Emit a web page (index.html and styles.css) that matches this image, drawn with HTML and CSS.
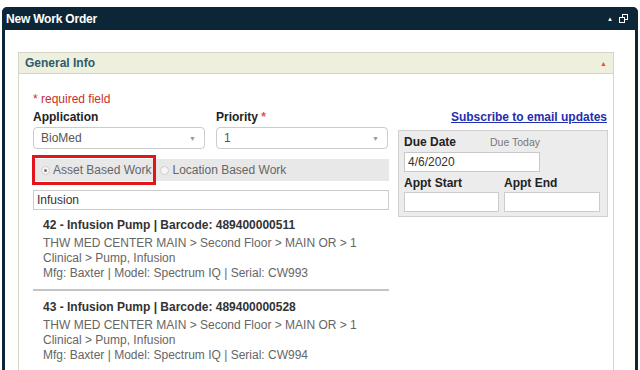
FILE: index.html
```html
<!DOCTYPE html>
<html lang="en">

<head>
    <meta charset="UTF-8">
    <title>New Work Order</title>
    <link rel="stylesheet" href="styles.css">
</head>

<body>
    <div class="window">
        <div class="window-head">
            <span class="window-title">New Work Order</span>
            <span class="window-tools">
                <span class="tri-up">&#9650;</span>
                <svg class="restore" width="9" height="9" viewBox="0 0 9 9">
                    <rect x="3.5" y="0.5" width="5" height="5" fill="none" stroke="#fff" />
                    <rect x="0.5" y="3.5" width="5" height="5" fill="#0d2637" stroke="#fff" />
                </svg>
            </span>
        </div>
        <div class="window-body">
            <div class="panel">
                <div class="panel-head">
                    <span>General Info</span>
                    <span class="panel-toggle">&#9650;</span>
                </div>
                <div class="panel-body">
                    <div class="left-col">
                        <p class="required">* required field</p>
                        <div class="field-row">
                            <div class="field">
                                <label>Application</label>
                                <div class="select">BioMed<span class="arrow">&#9660;</span></div>
                            </div>
                            <div class="field">
                                <label>Priority <span class="star">*</span></label>
                                <div class="select">1<span class="arrow">&#9660;</span></div>
                            </div>
                        </div>
                        <div class="radio-row">
                            <label class="radio selected"><span class="dot checked"></span>Asset Based Work</label>
                            <label class="radio"><span class="dot"></span>Location Based Work</label>
                        </div>
                        <div class="text-input">Infusion</div>
                        <ul class="results">
                            <li>
                                <b>42 - Infusion Pump | Barcode: 489400000511</b>
                                <span>THW MED CENTER MAIN &gt; Second Floor &gt; MAIN OR &gt; 1</span>
                                <span>Clinical &gt; Pump, Infusion</span>
                                <span>Mfg: Baxter | Model: Spectrum IQ | Serial: CW993</span>
                            </li>
                            <li>
                                <b>43 - Infusion Pump | Barcode: 489400000528</b>
                                <span>THW MED CENTER MAIN &gt; Second Floor &gt; MAIN OR &gt; 1</span>
                                <span>Clinical &gt; Pump, Infusion</span>
                                <span>Mfg: Baxter | Model: Spectrum IQ | Serial: CW994</span>
                            </li>
                        </ul>
                    </div>
                    <div class="right-col">
                        <a class="subscribe" href="#">Subscribe to email updates</a>
                        <div class="dates">
                            <div class="due-line">
                                <label>Due Date</label>
                                <span class="due-note">Due Today</span>
                            </div>
                            <div class="text-input due-input">4/6/2020</div>
                            <div class="appt">
                                <div>
                                    <label>Appt Start</label>
                                    <div class="text-input"></div>
                                </div>
                                <div>
                                    <label>Appt End</label>
                                    <div class="text-input"></div>
                                </div>
                            </div>
                        </div>
                    </div>
                </div>
            </div>
        </div>
    </div>
</body>

</html>
```

FILE: styles.css
```css
body {
    margin: 0;
    padding: 7px 2px 0;
    font-family: 'Liberation Sans', Arial, sans-serif;
    font-size: 12px;
    color: #333;
    background: white;
    overflow: hidden;
}

.window {
    border: 3px solid #0d2637;
    border-top: 0;
    border-radius: 6px 6px 0 0;
    height: 400px;
}

.window-head {
    background: #0d2637;
    color: white;
    height: 23px;
    display: flex;
    align-items: center;
    justify-content: space-between;
    padding: 0 10px 0 4px;
    border-radius: 5px 5px 0 0;
    margin: 0 -3px;
}

.window-title {
    font-weight: bold;
    font-size: 12px;
    letter-spacing: -0.2px;
}

.window-tools {
    display: flex;
    align-items: center;
    gap: 6px;
}

.tri-up {
    font-size: 6px;
}

.window-body {
    padding: 22px 21px 0 13px;
}

.panel {
    border: 1px solid #d6d6c8;
    border-bottom: 0;
}

.panel-head {
    background: #efefdd;
    height: 20px;
    border-bottom: 1px solid #d6d6c8;
    display: flex;
    align-items: center;
    justify-content: space-between;
    padding: 0 6px 0 6px;
    color: #2b5d6e;
    font-weight: bold;
}

.panel-toggle {
    color: #e0562b;
    font-size: 7px;
}

.panel-body {
    display: grid;
    grid-template-columns: 356px 210px;
    gap: 9px;
    padding: 18px 0 0 14px;
}

.required {
    margin: 0;
    color: #c8302d;
    line-height: 14px;
}

.field-row {
    display: flex;
    gap: 11px;
    margin-top: 3px;
}

.field {
    width: 172px;
}

label {
    display: block;
    font-weight: bold;
    color: #222;
    line-height: 16px;
}

.star {
    color: #e0505a;
}

.select {
    margin-top: 2px;
    height: 20px;
    border: 1px solid #ccc;
    border-radius: 4px;
    padding: 0 8px 0 7px;
    display: flex;
    align-items: center;
    justify-content: space-between;
    color: #555;
}

.arrow {
    color: #999;
    font-size: 7px;
}

.radio-row {
    margin-top: 10px;
    background: #e8e8e8;
    height: 22px;
    display: flex;
    align-items: center;
}

.radio {
    display: flex;
    align-items: center;
    font-weight: normal;
    color: #666;
    font-size: 12px;
    gap: 3px;
}

.radio.selected {
    border: 3px solid #e4141b;
    box-sizing: border-box;
    height: 30px;
    margin: 0 4px 0 -1px;
    padding: 0 2px 0 6px;
}

.dot {
    width: 9px;
    height: 9px;
    border-radius: 50%;
    border: 1px solid #cfcfcf;
    background: #f6f6f6;
    box-sizing: border-box;
    position: relative;
}

.dot.checked::after {
    content: "";
    position: absolute;
    left: 2px;
    top: 2px;
    width: 3px;
    height: 3px;
    border-radius: 50%;
    background: #777;
}

.text-input {
    height: 18px;
    border: 1px solid #ccc;
    background: white;
    padding: 0 3px;
    line-height: 18px;
    color: #333;
    margin-top: 9px;
}

.results {
    list-style: none;
    margin: 8px 0 0;
    padding: 0;
}

.results li {
    border-bottom: 2px solid #c4c4c4;
    padding: 0 0 8px 10px;
    margin-bottom: 9px;
    line-height: 15px;
}

.results b {
    display: block;
    color: #333;
    margin-bottom: 3px;
}

.results span {
    display: block;
    color: #666;
}

.right-col {
    padding-top: 17px;
    display: flex;
    flex-direction: column;
    align-items: flex-end;
}

.subscribe {
    color: #1f2fb0;
    font-weight: bold;
    line-height: 16px;
    margin-right: 1px;
}

.dates {
    margin-top: 5px;
    width: 100%;
    box-sizing: border-box;
    background: #ececec;
    border: 1px solid #d0d0d0;
    padding: 4px 7px 4px 5px;
}

.dates label {
    line-height: 14px;
}

.due-line {
    display: flex;
    align-items: center;
    line-height: 14px;
}

.due-line label {
    width: 86px;
}

.due-note {
    color: #777;
    font-size: 10.5px;
}

.due-input {
    margin-top: 3px;
    width: 128px;
    border-color: #c8c8c8;
}

.appt {
    display: grid;
    grid-template-columns: 95px 96px;
    gap: 5px;
    margin-top: 4px;
}

.appt .text-input {
    margin-top: 2px;
}
```
